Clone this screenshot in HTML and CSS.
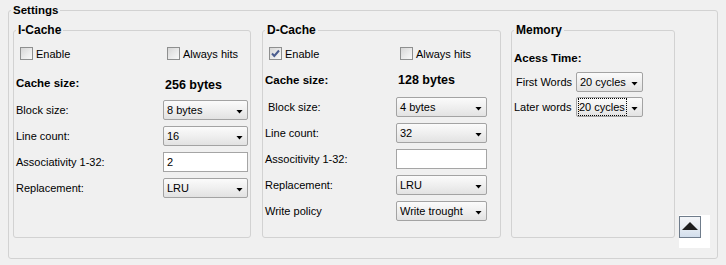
FILE: index.html
```html
<!DOCTYPE html>
<html>
<head>
<meta charset="utf-8">
<link rel="stylesheet" href="styles.css">
</head>
<body>
<fieldset class="settings">
  <legend class="legend-main">Settings</legend>
  <div class="groups">
    <fieldset class="group icache">
      <legend class="legend-group">I-Cache</legend>
      <div class="row check-row">
        <label class="check"><span class="box"></span>Enable</label>
        <label class="check"><span class="box"></span>Always hits</label>
      </div>
      <div class="row size-row">
        <span class="bold">Cache size:</span>
        <span class="bold value low">256 bytes</span>
      </div>
      <div class="row field-row first"><span class="label">Block size:</span><span class="combo"><span class="combo-text">8 bytes</span><span class="arrow"></span></span></div>
      <div class="row field-row"><span class="label">Line count:</span><span class="combo"><span class="combo-text">16</span><span class="arrow"></span></span></div>
      <div class="row field-row"><span class="label">Associativity 1-32:</span><span class="input">2</span></div>
      <div class="row field-row"><span class="label">Replacement:</span><span class="combo"><span class="combo-text">LRU</span><span class="arrow"></span></span></div>
    </fieldset>

    <fieldset class="group dcache">
      <legend class="legend-group">D-Cache</legend>
      <div class="row check-row">
        <label class="check"><span class="box checked"><svg width="11" height="11" viewBox="0 0 11 11"><path d="M2 5.5 L4.3 8 L9 2.5" fill="none" stroke="#4b5d8f" stroke-width="2"/></svg></span>Enable</label>
        <label class="check"><span class="box"></span>Always hits</label>
      </div>
      <div class="row size-row">
        <span class="bold">Cache size:</span>
        <span class="bold value">128 bytes</span>
      </div>
      <div class="row field-row first"><span class="label indent">Block size:</span><span class="combo"><span class="combo-text">4 bytes</span><span class="arrow"></span></span></div>
      <div class="row field-row"><span class="label">Line count:</span><span class="combo"><span class="combo-text">32</span><span class="arrow"></span></span></div>
      <div class="row field-row"><span class="label">Associtivity 1-32:</span><span class="input"></span></div>
      <div class="row field-row"><span class="label">Replacement:</span><span class="combo"><span class="combo-text">LRU</span><span class="arrow"></span></span></div>
      <div class="row field-row"><span class="label">Write policy</span><span class="combo"><span class="combo-text">Write trought</span><span class="arrow"></span></span></div>
    </fieldset>

    <fieldset class="group memory">
      <legend class="legend-group">Memory</legend>
      <div class="row size-row access">
        <span class="bold">Acess Time:</span>
      </div>
      <div class="row field-row mem-first"><span class="label indent2">First Words</span><span class="combo"><span class="combo-text">20 cycles</span><span class="arrow"></span></span></div>
      <div class="row field-row mem-second"><span class="label">Later words</span><span class="combo"><span class="combo-text focus">20 cycles</span><span class="arrow"></span></span></div>
    </fieldset>

    <div class="up-wrap">
      <button class="up-btn" type="button"><span class="up-tri"></span></button>
    </div>
  </div>
</fieldset>
</body>
</html>
```

FILE: styles.css
```css
html, body {
  margin: 0;
  background: #f0f0f0;
}
body {
  padding: 4px 0 0 8px;
  font-family: "Liberation Sans", Arial, sans-serif;
  font-size: 11px;
  color: #000;
}
fieldset {
  margin: 0;
  min-width: 0;
  box-sizing: border-box;
  border: 1px solid #d2d2d2;
  border-radius: 3px;
}
.settings {
  width: 710px;
  padding: 7px 0 20px 4px;
}
legend {
  font-weight: bold;
  line-height: 13px;
}
.legend-main {
  font-size: 11.5px;
  margin-left: -2px;
  padding: 0 2px;
}
.legend-group {
  font-size: 12px;
  padding: 0 2px;
}
.groups {
  display: flex;
  align-items: stretch;
}
.group {
  height: 214px;
  padding: 8px 0 0 2px;
}
.icache { width: 238px; margin-right: 11px; }
.dcache { width: 239px; margin-right: 10px; }
.memory { width: 164px; }

.row {
  display: grid;
  align-items: center;
}
.icache .row { grid-template-columns: 147px 85px; }
.dcache .row { grid-template-columns: 131px 91px; }
.memory .row { grid-template-columns: 62px 67px; }

.check-row { height: 17px; }
.check {
  display: flex;
  align-items: center;
  gap: 3px;
  padding-left: 4px;
  white-space: nowrap;
}
.box {
  width: 13px;
  height: 13px;
  box-sizing: border-box;
  border: 1px solid #8e8f8f;
  background: linear-gradient(135deg, #d6d6d6 0%, #ececec 60%, #f8f8f8 100%);
  display: flex;
  align-items: center;
  justify-content: center;
}
.box svg { display: block; }

.size-row {
  height: 13px;
  margin-top: 12px;
  line-height: 13px;
}
.bold {
  font-weight: bold;
  font-size: 11.5px;
  white-space: nowrap;
}
.value { font-size: 12.5px; padding-left: 2px; }
.low { padding-top: 5px; }

.field-row {
  height: 20px;
  margin-top: 6px;
}
.icache .field-row.first { margin-top: 13px; }
.dcache .field-row.first { margin-top: 10px; }
.label { white-space: nowrap; }
.indent { padding-left: 3px; }
.indent2 { padding-left: 2px; }

.access { margin-top: 7px; }
.mem-first { margin-top: 7px; }
.mem-second { margin-top: 5px; }

.combo {
  height: 20px;
  box-sizing: border-box;
  border: 1px solid #a3a3a3;
  border-radius: 2px;
  background: linear-gradient(#fbfbfb 0%, #eeeeee 55%, #e2e2e2 100%);
  display: flex;
  align-items: center;
  justify-content: space-between;
  padding: 0 4px 0 2px;
  white-space: nowrap;
}
.combo-text {
  height: 100%;
  display: flex;
  align-items: center;
  padding-left: 1px;
}
.focus {
  box-sizing: border-box;
  height: 18px;
  border: 1px dotted #000;
  padding: 0 1px 0 0;
  margin-left: -1px;
}
.arrow {
  width: 7px;
  height: 4px;
  margin-top: 3px;
  background: #000;
  clip-path: polygon(0 0, 100% 0, 50% 100%);
}
.input {
  height: 20px;
  box-sizing: border-box;
  border: 1px solid #a5a5a5;
  background: #fff;
  display: flex;
  align-items: center;
  padding-left: 3px;
}

.up-wrap {
  align-self: flex-end;
  margin: 0 0 -10px 4px;
  padding: 1px 9px 10px 0;
  background: #fff;
}
.up-btn {
  width: 22px;
  height: 22px;
  box-sizing: border-box;
  padding: 0;
  margin: 0;
  border: 1px solid #6f7c8b;
  background: linear-gradient(#f3f5f8 0%, #e9eef4 45%, #d2deec 100%);
  display: flex;
  align-items: center;
  justify-content: center;
}
.up-tri {
  width: 16px;
  height: 8px;
  margin-top: -2px;
  background: #1e1e1e;
  clip-path: polygon(50% 0, 100% 100%, 0 100%);
}
```
